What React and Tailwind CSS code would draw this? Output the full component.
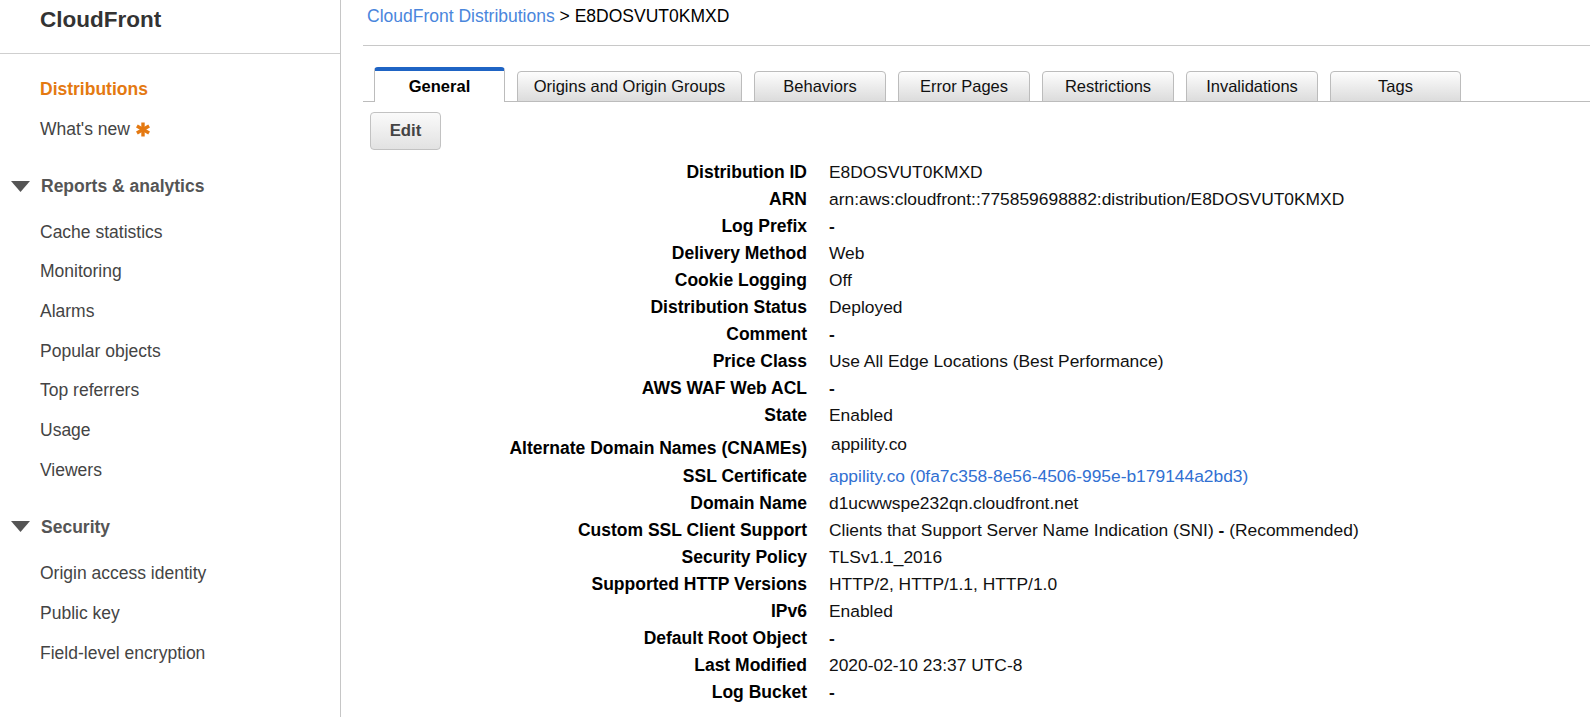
import { useState } from 'react'

const REPORTS = ['Cache statistics', 'Monitoring', 'Alarms', 'Popular objects', 'Top referrers', 'Usage', 'Viewers']
const SECURITY = ['Origin access identity', 'Public key', 'Field-level encryption']

const TABS = [
  { name: 'General', w: 'w-[131px]' },
  { name: 'Origins and Origin Groups', w: 'w-[225px]' },
  { name: 'Behaviors', w: 'w-[132px]' },
  { name: 'Error Pages', w: 'w-[132px]' },
  { name: 'Restrictions', w: 'w-[132px]' },
  { name: 'Invalidations', w: 'w-[132px]' },
  { name: 'Tags', w: 'w-[131px]' }
]

const DASH = <span className="font-bold">-</span>

const ROWS_TOP = [
  ['Distribution ID', 'E8DOSVUT0KMXD'],
  ['ARN', 'arn:aws:cloudfront::775859698882:distribution/E8DOSVUT0KMXD'],
  ['Log Prefix', DASH],
  ['Delivery Method', 'Web'],
  ['Cookie Logging', 'Off'],
  ['Distribution Status', 'Deployed'],
  ['Comment', DASH],
  ['Price Class', 'Use All Edge Locations (Best Performance)'],
  ['AWS WAF Web ACL', DASH],
  ['State', 'Enabled']
]

const ROWS_BOTTOM = [
  ['SSL Certificate', <span className="text-[#3170d2]">appility.co (0fa7c358-8e56-4506-995e-b179144a2bd3)</span>],
  ['Domain Name', 'd1ucwwspe232qn.cloudfront.net'],
  ['Custom SSL Client Support', <>Clients that Support Server Name Indication (SNI) {DASH} (Recommended)</>],
  ['Security Policy', 'TLSv1.1_2016'],
  ['Supported HTTP Versions', 'HTTP/2, HTTP/1.1, HTTP/1.0'],
  ['IPv6', 'Enabled'],
  ['Default Root Object', DASH],
  ['Last Modified', '2020-02-10 23:37 UTC-8'],
  ['Log Bucket', DASH]
]

function Caret() {
  return (
    <svg width="19" height="11" viewBox="0 0 19 11" className="shrink-0">
      <path d="M0 0 H19 L9.5 11 Z" fill="#555" />
    </svg>
  )
}

function Asterisk() {
  return (
    <svg width="14" height="15" viewBox="0 0 14 15" className="ml-[6px]">
      <g stroke="#e47911" strokeWidth="3.4">
        <line x1="7" y1="0.5" x2="7" y2="14.5" />
        <line x1="0.9" y1="4" x2="13.1" y2="11" />
        <line x1="0.9" y1="11" x2="13.1" y2="4" />
      </g>
    </svg>
  )
}

function Row({ label, value }) {
  return (
    <div className="flex h-[27px] leading-[27px]">
      <div className="w-[444px] shrink-0 text-right font-bold text-[17.5px] text-black">{label}</div>
      <div className="pl-[22px] text-[17.4px] text-[#111] whitespace-nowrap">{value}</div>
    </div>
  )
}

export default function App() {
  const [tab, setTab] = useState('General')

  return (
    <div className="flex w-[1590px] h-[717px] overflow-hidden bg-white font-['Liberation_Sans',Arial,sans-serif]">
      {/* sidebar */}
      <aside className="w-[341px] shrink-0 border-r border-[#c6c6c6] text-[17.5px] text-[#444]">
        <div className="h-[54px] border-b border-[#cfcfcf] pl-10 pt-[7px] text-[22.5px] leading-[26px] font-bold text-[#333]">
          CloudFront
        </div>
        <div className="mt-[15px] pl-10">
          <div className="h-10 flex items-center font-bold text-[#e47911]">Distributions</div>
          <div className="h-10 flex items-center">
            What's new
            <Asterisk />
          </div>
        </div>

        <div className="mt-[17px] h-10 flex items-center pl-[11px] gap-[11px] font-bold text-[#555]">
          <Caret />
          Reports &amp; analytics
        </div>
        <div className="mt-[6px] pl-10">
          {REPORTS.map((r) => (
            <div key={r} className="h-[39.7px] flex items-center">{r}</div>
          ))}
        </div>

        <div className="mt-[17px] h-10 flex items-center pl-[11px] gap-[11px] font-bold text-[#555]">
          <Caret />
          Security
        </div>
        <div className="mt-[6px] pl-10">
          {SECURITY.map((r) => (
            <div key={r} className="h-10 flex items-center">{r}</div>
          ))}
        </div>
      </aside>

      {/* main */}
      <main className="flex-1 pl-[22px]">
        <div className="h-[46px] border-b border-[#c8c8c8] pl-[4px] pt-[6px] leading-[20px] text-[17.5px] text-black">
          <span className="text-[#4a86dc]">CloudFront Distributions</span> &gt; E8DOSVUT0KMXD
        </div>

        <div className="h-[56px] flex items-end gap-3 pl-[11px] border-b border-[#bcbcbc]">
          {TABS.map((t) =>
            t.name === tab ? (
              <button
                key={t.name}
                onClick={() => setTab(t.name)}
                className={`${t.w} h-[35px] -mb-px bg-white border-x border-[#bcbcbc] border-t-4 border-t-[#1f64c4] rounded-t-[4px] text-[16.5px] font-bold text-black`}
              >
                {t.name}
              </button>
            ) : (
              <button
                key={t.name}
                onClick={() => setTab(t.name)}
                className={`${t.w} h-[31px] -mb-px border border-[#bcbcbc] rounded-t-[4px] bg-gradient-to-b from-[#fdfdfd] to-[#dcdcdc] text-[16.5px] text-[#111]`}
              >
                {t.name}
              </button>
            )
          )}
        </div>

        <button className="mt-[10px] ml-[7px] w-[71px] h-[38px] border border-[#c2c2c2] rounded-[4px] bg-gradient-to-b from-[#fafafa] to-[#e2e2e2] text-[16.8px] font-bold text-[#444]">
          Edit
        </button>

        <div className="mt-[9px]">
          {ROWS_TOP.map(([l, v]) => (
            <Row key={l} label={l} value={v} />
          ))}
          <div className="flex h-[34px] leading-[27px]">
            <div className="w-[444px] shrink-0 pt-[6px] text-right font-bold text-[17.5px] text-black">
              Alternate Domain Names (CNAMEs)
            </div>
            <div className="pl-[24px] pt-[2px] text-[17.4px] text-[#111]">appility.co</div>
          </div>
          {ROWS_BOTTOM.map(([l, v]) => (
            <Row key={l} label={l} value={v} />
          ))}
        </div>
      </main>
    </div>
  )
}
